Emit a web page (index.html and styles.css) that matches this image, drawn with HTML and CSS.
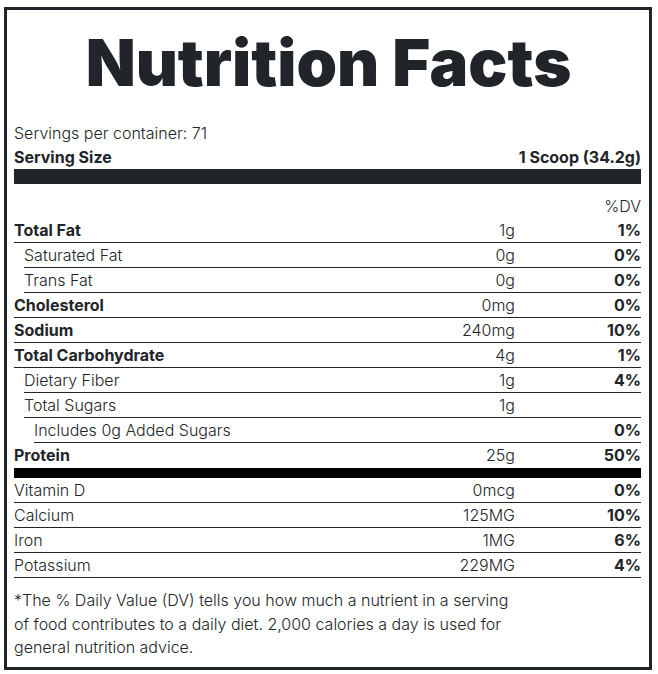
FILE: index.html
```html
<!DOCTYPE html>
<html>
<head>
<meta charset="utf-8">
<link rel="stylesheet" href="styles.css">
</head>
<body>
<div class="label">
  <h1 class="title">Nutrition Facts</h1>
  <div class="servings">Servings per container: 71</div>
  <div class="serving-size"><span>Serving Size</span><span>1 Scoop (34.2g)</span></div>
  <div class="bar-thick"></div>
  <div class="dv-head">%DV</div>
  <div class="rows">
    <div class="row major"><span class="name">Total Fat</span><span class="amt">1g</span><span class="dv">1%</span></div>
    <div class="row sub"><span class="name">Saturated Fat</span><span class="amt">0g</span><span class="dv">0%</span></div>
    <div class="row sub"><span class="name">Trans Fat</span><span class="amt">0g</span><span class="dv">0%</span></div>
    <div class="row major"><span class="name">Cholesterol</span><span class="amt">0mg</span><span class="dv">0%</span></div>
    <div class="row major"><span class="name">Sodium</span><span class="amt">240mg</span><span class="dv">10%</span></div>
    <div class="row major"><span class="name">Total Carbohydrate</span><span class="amt">4g</span><span class="dv">1%</span></div>
    <div class="row sub"><span class="name">Dietary Fiber</span><span class="amt">1g</span><span class="dv">4%</span></div>
    <div class="row sub"><span class="name">Total Sugars</span><span class="amt">1g</span><span class="dv"></span></div>
    <div class="row subsub"><span class="name">Includes 0g Added Sugars</span><span class="amt"></span><span class="dv">0%</span></div>
    <div class="row major last"><span class="name">Protein</span><span class="amt">25g</span><span class="dv">50%</span></div>
  </div>
  <div class="bar-medium"></div>
  <div class="rows vitamins">
    <div class="row"><span class="name">Vitamin D</span><span class="amt">0mcg</span><span class="dv">0%</span></div>
    <div class="row"><span class="name">Calcium</span><span class="amt">125MG</span><span class="dv">10%</span></div>
    <div class="row"><span class="name">Iron</span><span class="amt">1MG</span><span class="dv">6%</span></div>
    <div class="row"><span class="name">Potassium</span><span class="amt">229MG</span><span class="dv">4%</span></div>
  </div>
  <p class="footnote">*The % Daily Value (DV) tells you how much a nutrient in a serving of food contributes to a daily diet. 2,000 calories a day is used for general nutrition advice.</p>
</div>
</body>
</html>
```

FILE: styles.css
```css
html, body {
  margin: 0;
  padding: 0;
  background: #fff;
}
body {
  font-family: Inter, "Liberation Sans", sans-serif;
  color: #212529;
  padding: 7px 6px 4px 4px;
}
.label {
  box-sizing: border-box;
  width: 648px;
  height: 663px;
  border: 3px solid #212529;
  padding: 13px 8px 0 7px;
}
.title {
  margin: 0;
  text-align: center;
  font-size: 65px;
  line-height: 80px;
  font-weight: 900;
  letter-spacing: 0;
  padding-left: 2px;
}
.servings {
  margin-top: 18px;
  font-size: 16px;
  font-weight: 300;
  line-height: 24px;
}
.serving-size {
  display: flex;
  justify-content: space-between;
  font-size: 16px;
  font-weight: 700;
  line-height: 24px;
}
.bar-thick {
  height: 15px;
  background: #212529;
}
.dv-head {
  margin-top: 10px;
  text-align: right;
  font-size: 16px;
  font-weight: 300;
  line-height: 24px;
}
.row {
  display: grid;
  grid-template-columns: 1fr 140px 126px;
  font-size: 16px;
  line-height: 24px;
  font-weight: 300;
  border-bottom: 1px solid #212529;
}
.row .amt { text-align: right; }
.row .dv { text-align: right; font-weight: 700; }
.row.major .name { font-weight: 700; }
.row.sub { margin-left: 10px; grid-template-columns: 1fr 140px 126px; }
.row.subsub { margin-left: 20px; }
.row.last { border-bottom: none; }
.bar-medium {
  height: 10px;
  background: #000;
  margin-top: 1px;
}
.footnote {
  margin: 11px 0 0;
  font-size: 16px;
  font-weight: 300;
  line-height: 23.5px;
  max-width: 505px;
}
```
